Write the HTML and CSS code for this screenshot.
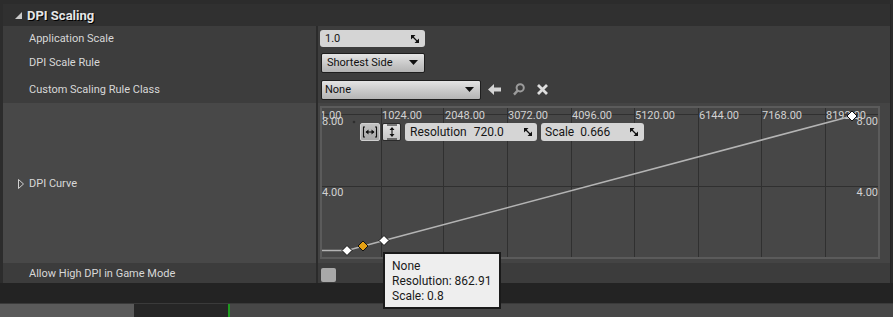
FILE: index.html
```html
<!DOCTYPE html>
<html>
<head>
<meta charset="utf-8">
<link rel="stylesheet" href="styles.css">
</head>
<body>
<div class="frame">
  <div class="panel">
    <div class="section-header">
      <svg class="collapse-tri" width="7" height="7" viewBox="0 0 7 7"><polygon points="7,0 7,7 0,7" fill="#c9c9c9"/></svg>
      <span class="section-title">DPI Scaling</span>
    </div>

    <div class="row row-app">
      <div class="label-cell"><span class="label">Application Scale</span></div>
      <div class="value-cell">
        <div class="numbox numbox-app">
          <span class="numtext">1.0</span>
          <svg class="resize-ico" width="8" height="8" viewBox="0 0 8 8"><path d="M0 0H4.5L0 4.5Z M8 8H3.5L8 3.5Z" fill="#111"/><path d="M1 1L7 7" stroke="#111" stroke-width="1.3"/></svg>
        </div>
      </div>
    </div>

    <div class="row row-rule">
      <div class="label-cell"><span class="label">DPI Scale Rule</span></div>
      <div class="value-cell">
        <div class="combo combo-rule">
          <span class="combo-text">Shortest Side</span>
          <svg class="combo-arrow" width="9" height="5" viewBox="0 0 9 5"><polygon points="0,0 9,0 4.5,5" fill="#111"/></svg>
        </div>
      </div>
    </div>

    <div class="row row-class">
      <div class="label-cell"><span class="label">Custom Scaling Rule Class</span></div>
      <div class="value-cell">
        <div class="combo combo-class">
          <span class="combo-text">None</span>
          <svg class="combo-arrow" width="9" height="5" viewBox="0 0 9 5"><polygon points="0,0 9,0 4.5,5" fill="#111"/></svg>
        </div>
        <div class="asset-tools">
          <svg class="tool-ico" width="13" height="11" viewBox="0 0 13 11"><polygon points="0,5.5 6,0 6,3.5 13,3.5 13,7.5 6,7.5 6,11" fill="#d4d4d4"/></svg>
          <svg class="tool-ico" width="12" height="13" viewBox="0 0 12 13"><circle cx="7.2" cy="4.8" r="3.6" fill="none" stroke="#9c9c9c" stroke-width="2"/><path d="M4.6 7.6L1 11.6" stroke="#9c9c9c" stroke-width="2.4"/></svg>
          <svg class="tool-ico" width="11" height="11" viewBox="0 0 11 11"><path d="M1 1L10 10M10 1L1 10" stroke="#dedede" stroke-width="2.8"/></svg>
        </div>
      </div>
    </div>

    <div class="row row-curve">
      <div class="label-cell curve-label">
        <svg class="expand-tri" width="6" height="10" viewBox="0 0 6 10"><polygon points="0.5,0.5 5.5,5 0.5,9.5" fill="none" stroke="#d0d0d0" stroke-width="1"/></svg>
        <span class="label">DPI Curve</span>
      </div>
      <div class="value-cell curve-cell">
        <div class="curve-box">
          <svg class="curve-svg" width="556" height="149" viewBox="0 0 556 149">
            <g stroke="#303030" stroke-width="1">
              <line x1="59.5" y1="0" x2="59.5" y2="149"/>
              <line x1="121.5" y1="0" x2="121.5" y2="149"/>
              <line x1="185.5" y1="0" x2="185.5" y2="149"/>
              <line x1="249.5" y1="0" x2="249.5" y2="149"/>
              <line x1="312.5" y1="0" x2="312.5" y2="149"/>
              <line x1="376.5" y1="0" x2="376.5" y2="149"/>
              <line x1="439.5" y1="0" x2="439.5" y2="149"/>
              <line x1="503.5" y1="0" x2="503.5" y2="149"/>
              <line x1="0" y1="6.5" x2="556" y2="6.5"/>
              <line x1="0" y1="78.5" x2="556" y2="78.5"/>
            </g>
            <g class="axis-text" fill="#d2d2d2">
              <text x="-2" y="11">1.00</text>
              <text x="60" y="11">1024.00</text>
              <text x="123" y="11">2048.00</text>
              <text x="186" y="11">3072.00</text>
              <text x="250" y="11">4096.00</text>
              <text x="313" y="11">5120.00</text>
              <text x="377" y="11">6144.00</text>
              <text x="440" y="11">7168.00</text>
              <text x="504" y="11">8192.00</text>
              <text x="0" y="17">8.00</text>
              <text x="556" y="17" text-anchor="end">8.00</text>
              <text x="0" y="88">4.00</text>
              <text x="556" y="88" text-anchor="end">4.00</text>
            </g>
            <circle cx="32" cy="14" r="1.3" fill="#2e2e2e"/>
            <polyline points="0,142.5 25,142.5 62,132.5 530,8" fill="none" stroke="#b4b4b4" stroke-width="1.6"/>
            <g stroke="#111" stroke-width="1">
              <polygon points="25,137.5 30,142.5 25,147.5 20,142.5" fill="#ffffff"/>
              <polygon points="41,133 46,138 41,143 36,138" fill="#e3a014"/>
              <polygon points="62,127.5 67,132.5 62,137.5 57,132.5" fill="#ffffff"/>
              <polygon points="530,3 535,8 530,13 525,8" fill="#ffffff"/>
            </g>
          </svg>

          <div class="curve-toolbar">
            <div class="tb-btn tb-btn-pressed">
              <svg width="16" height="12" viewBox="0 0 16 12"><path d="M1.5 1V11M14.5 1V11M1 1H3M1 11H3M13 1H15M13 11H15" stroke="#111" stroke-width="1.1" fill="none"/><path d="M4 6H12" stroke="#111" stroke-width="1.1"/><path d="M3.5 6L6.5 3.5V8.5Z M12.5 6L9.5 3.5V8.5Z" fill="#111"/></svg>
            </div>
            <div class="tb-btn">
              <svg width="14" height="16" viewBox="0 0 14 16"><path d="M2 1H12M2 15H12" stroke="#111" stroke-width="1.2"/><path d="M7 4V12" stroke="#111" stroke-width="1.1"/><path d="M7 3L4.5 6H9.5Z M7 13L4.5 10H9.5Z" fill="#111"/></svg>
            </div>
            <div class="numbox numbox-res">
              <span class="numtext">Resolution</span><span class="numval">720.0</span>
              <svg class="resize-ico" width="8" height="8" viewBox="0 0 8 8"><path d="M0 0H4.5L0 4.5Z M8 8H3.5L8 3.5Z" fill="#111"/><path d="M1 1L7 7" stroke="#111" stroke-width="1.3"/></svg>
            </div>
            <div class="numbox numbox-scale">
              <span class="numtext">Scale</span><span class="numval">0.666</span>
              <svg class="resize-ico" width="8" height="8" viewBox="0 0 8 8"><path d="M0 0H4.5L0 4.5Z M8 8H3.5L8 3.5Z" fill="#111"/><path d="M1 1L7 7" stroke="#111" stroke-width="1.3"/></svg>
            </div>
          </div>

          <div class="tooltip">
            <div>None</div>
            <div>Resolution: 862.91</div>
            <div>Scale: 0.8</div>
          </div>
        </div>
      </div>
    </div>

    <div class="row row-allow">
      <div class="label-cell"><span class="label">Allow High DPI in Game Mode</span></div>
      <div class="value-cell allow-cell">
        <div class="checkbox"></div>
      </div>
    </div>
  </div>
</div>
<div class="bottom-bar">
  <div class="bb-seg bb-a"></div>
  <div class="bb-seg bb-b"></div>
  <div class="bb-seg bb-green"></div>
  <div class="bb-seg bb-c"></div>
</div>
</body>
</html>
```

FILE: styles.css
```css
* { box-sizing: border-box; }

html, body {
  margin: 0;
  padding: 0;
}

body {
  width: 893px;
  height: 317px;
  overflow: hidden;
  background: #232323;
  font-family: Roboto, "Liberation Sans", sans-serif;
}

.frame {
  background: #2c2c2c;
  padding: 4px 2px 0 3px;
}

.panel {
  display: flex;
  flex-direction: column;
  border-right: 1px solid #262626;
}

.section-header {
  height: 22px;
  background: #303030;
  display: flex;
  align-items: center;
  padding-left: 12px;
  gap: 5px;
}

.collapse-tri {
  display: block;
  margin-top: 1px;
}

.section-title {
  font-size: 13px;
  font-weight: 700;
  color: #e6e6e6;
  text-shadow: 1px 1px 0 #000;
}

.row {
  display: flex;
  background: #3d3d3d;
}

.row-app { height: 24px; }
.row-rule { height: 25px; }
.row-class { height: 28px; }
.row-curve { height: 160px; background: #444444; }
.row-allow { height: 20px; background: #3c3c3c; }

.label-cell {
  width: 315px;
  flex: none;
  border-right: 2px solid #2b2b2b;
  display: flex;
  align-items: center;
  padding-left: 26px;
}

.row-curve .label-cell {
  background: #484848;
}

.curve-label {
  padding-left: 15px;
  gap: 5px;
}

.expand-tri { display: block; margin-top: 1px; }

.label {
  font-size: 11px;
  color: #d8d8d8;
  white-space: nowrap;
}

.value-cell {
  flex: 1;
  display: flex;
  align-items: center;
  padding-left: 2px;
}

.numbox {
  height: 17px;
  background: #d5d5d5;
  border-radius: 3px;
  display: flex;
  align-items: center;
  padding: 0 6px 0 5px;
  font-size: 11px;
  color: #151515;
}

.numbox-app {
  width: 105px;
  margin-top: 1px;
}

.numtext { white-space: nowrap; }

.numval {
  margin-left: 7px;
  white-space: nowrap;
}

.resize-ico {
  display: block;
  margin-left: auto;
}

.combo {
  height: 20px;
  border: 1px solid #1e1e1e;
  border-radius: 2px;
  background: linear-gradient(#e4e4e4, #c6c6c6 60%, #b4b4b4);
  display: flex;
  align-items: center;
  padding: 0 6px 0 5px;
  font-size: 11px;
  color: #101010;
}

.combo-rule { width: 104px; margin-left: 1px; }
.combo-class { width: 160px; margin-left: 1px; margin-top: 1px; padding-left: 3px; }

.combo-text { white-space: nowrap; }

.combo-arrow {
  display: block;
  margin-left: auto;
}

.asset-tools {
  display: flex;
  align-items: center;
  gap: 12px;
  margin-left: 7px;
  margin-top: 1px;
}

.tool-ico { display: block; }

.curve-cell {
  align-items: flex-start;
}

.curve-box {
  position: relative;
  margin-top: 3px;
  width: 560px;
  height: 153px;
  border: 2px solid #5b5b5b;
  background: #474747;
}

.curve-svg {
  display: block;
  overflow: hidden;
}

.axis-text text {
  font-family: Roboto, "Liberation Sans", sans-serif;
  font-size: 11px;
}

.curve-toolbar {
  position: absolute;
  left: 38px;
  top: 15px;
  display: flex;
  align-items: center;
}

.tb-btn {
  width: 20px;
  height: 18px;
  border: 1px solid #2a2a2a;
  border-radius: 2px;
  background: linear-gradient(#e2e2e2, #c4c4c4);
  display: flex;
  align-items: center;
  justify-content: center;
  margin-right: 2px;
}

.tb-btn-pressed {
  background: linear-gradient(#c2c2c2, #a8a8a8);
  border-color: #d0d0d0;
}

.tb-btn svg { display: block; }

.curve-toolbar .tb-btn + .tb-btn { width: 19px; margin-right: 4px; }

.numbox-res {
  width: 132px;
  height: 18px;
  font-size: 12px;
  margin-right: 4px;
  padding-right: 5px;
}

.numbox-scale {
  width: 103px;
  height: 18px;
  font-size: 12px;
  padding-right: 6px;
  padding-left: 4px;
}

.numbox-scale .numval { margin-left: 6px; }

.tooltip {
  position: absolute;
  left: 61px;
  top: 144px;
  width: 118px;
  height: 57px;
  z-index: 5;
  border: 2px solid #1a1a1a;
  background: #eeeeee;
  padding: 5px 0 0 7px;
  font-size: 12px;
  line-height: 15px;
  color: #1a1a1a;
  white-space: nowrap;
}

.allow-cell {
  align-items: flex-start;
}

.checkbox {
  width: 15px;
  height: 14px;
  margin-top: 5px;
  margin-left: 1px;
  background: #a9a9a9;
  border-radius: 2px;
}

.bottom-bar {
  position: absolute;
  left: 0;
  top: 303px;
  width: 893px;
  height: 14px;
  display: flex;
  border-top: 1px solid #3a3a3a;
}

.bb-seg { height: 100%; }
.bb-a { width: 134px; background: #5a5a5a; }
.bb-b { width: 94px; background: #262626; }
.bb-green { width: 2px; background: #1f9a1f; }
.bb-c { flex: 1; background: #474747; }
```
